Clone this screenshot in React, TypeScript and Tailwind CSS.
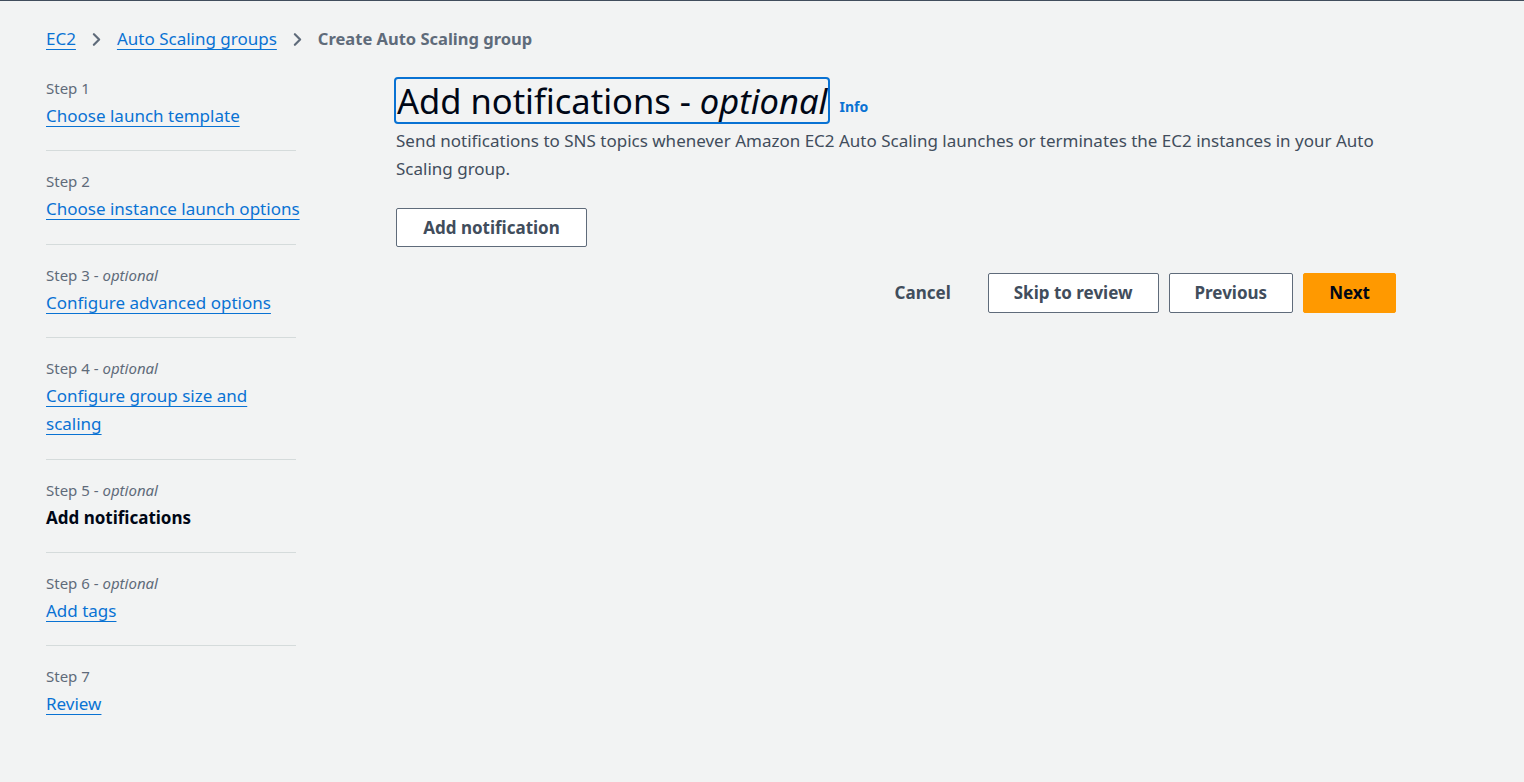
import { ChevronRight } from "lucide-react"

const steps = [
	{ label: "Step 1", optional: false, title: "Choose launch template" },
	{ label: "Step 2", optional: false, title: "Choose instance launch options" },
	{ label: "Step 3", optional: true, title: "Configure advanced options" },
	{ label: "Step 4", optional: true, title: "Configure group size and scaling" },
	{ label: "Step 5", optional: true, title: "Add notifications", current: true },
	{ label: "Step 6", optional: true, title: "Add tags" },
	{ label: "Step 7", optional: false, title: "Review" },
]

function Breadcrumbs() {
	return (
		<nav className="flex items-center gap-[10px] text-[17px] leading-[22px]">
			<a className="text-[#0972d3] underline underline-offset-[4px] decoration-1">EC2</a>
			<ChevronRight size={21} strokeWidth={2.5} className="text-[#5f6b7a]" />
			<a className="text-[#0972d3] underline underline-offset-[4px] decoration-1">
				Auto Scaling groups
			</a>
			<ChevronRight size={21} strokeWidth={2.5} className="text-[#5f6b7a]" />
			<span className="font-bold text-[16.5px] text-[#5f6b7a]">Create Auto Scaling group</span>
		</nav>
	)
}

function StepNav() {
	return (
		<ul className="w-[250px] shrink-0">
			{steps.map((s, i) => (
				<li
					key={s.label}
					className={`pb-[20.4px] ${
						i < steps.length - 1 ? "border-b border-[#d5dbdb]" : ""
					} ${i > 0 ? "pt-[19px]" : "pt-[8px]"}`}
				>
					<div className="text-[15px] leading-[22px] text-[#5f6b7a]">
						{s.label}
						{s.optional && (
							<>
								{" - "}
								<i>optional</i>
							</>
						)}
					</div>
					<div className="mt-[3px] w-[256px] text-[17px] leading-[28px]">
						{s.current ? (
							<span className="font-bold text-[#000716]">{s.title}</span>
						) : (
							<a className="text-[#0972d3] underline underline-offset-[4px] decoration-1">
								{s.title}
							</a>
						)}
					</div>
				</li>
			))}
		</ul>
	)
}

function Button({ children, primary }: { children: React.ReactNode; primary?: boolean }) {
	return (
		<button
			className={`h-[40px] rounded-[2px] px-[25px] text-[17px] font-bold ${
				primary
					? "bg-[#ff9900] text-[#000716] border border-[#ff9900]"
					: "bg-white text-[#414d5c] border border-[#5f6b7a]"
			}`}
		>
			{children}
		</button>
	)
}

export default function App() {
	return (
		<div
			className="min-h-screen bg-[#f2f3f3] border-t border-[#414d5c] text-[#000716]"
			style={{ fontFamily: '"Noto Sans", "Open Sans", Arial, sans-serif' }}
		>
			<div className="pl-[46px] pt-[27px]">
				<Breadcrumbs />
				<div className="flex mt-[19px]">
					<StepNav />
					<main className="ml-[100px] w-[1000px] pt-[8px]">
						<div className="flex items-end gap-[9px] -ml-[2px]">
							<h1 className="border-2 border-[#0972d3] rounded-[4px] px-[1px] text-[34.5px] leading-[43px] text-[#000716]">
								Add notifications - <i>optional</i>
							</h1>
							<a className="text-[14px] font-bold text-[#0972d3] mb-[7px]">Info</a>
						</div>
						<p className="mt-[3px] text-[17px] leading-[28px] text-[#414d5c] pr-[20px]">
							Send notifications to SNS topics whenever Amazon EC2 Auto Scaling launches or
							terminates the EC2 instances in your Auto Scaling group.
						</p>
						<div className="mt-[25px]">
							<button className="h-[39px] w-[191px] rounded-[2px] bg-white border border-[#5f6b7a] text-[17px] font-bold text-[#414d5c]">
								Add notification
							</button>
						</div>
						<div className="mt-[26px] flex justify-end items-center gap-[10px]">
							<button className="h-[40px] px-[27px] text-[17px] font-bold text-[#414d5c]">
								Cancel
							</button>
							<Button>Skip to review</Button>
							<Button>Previous</Button>
							<Button primary>Next</Button>
						</div>
					</main>
				</div>
			</div>
		</div>
	)
}
